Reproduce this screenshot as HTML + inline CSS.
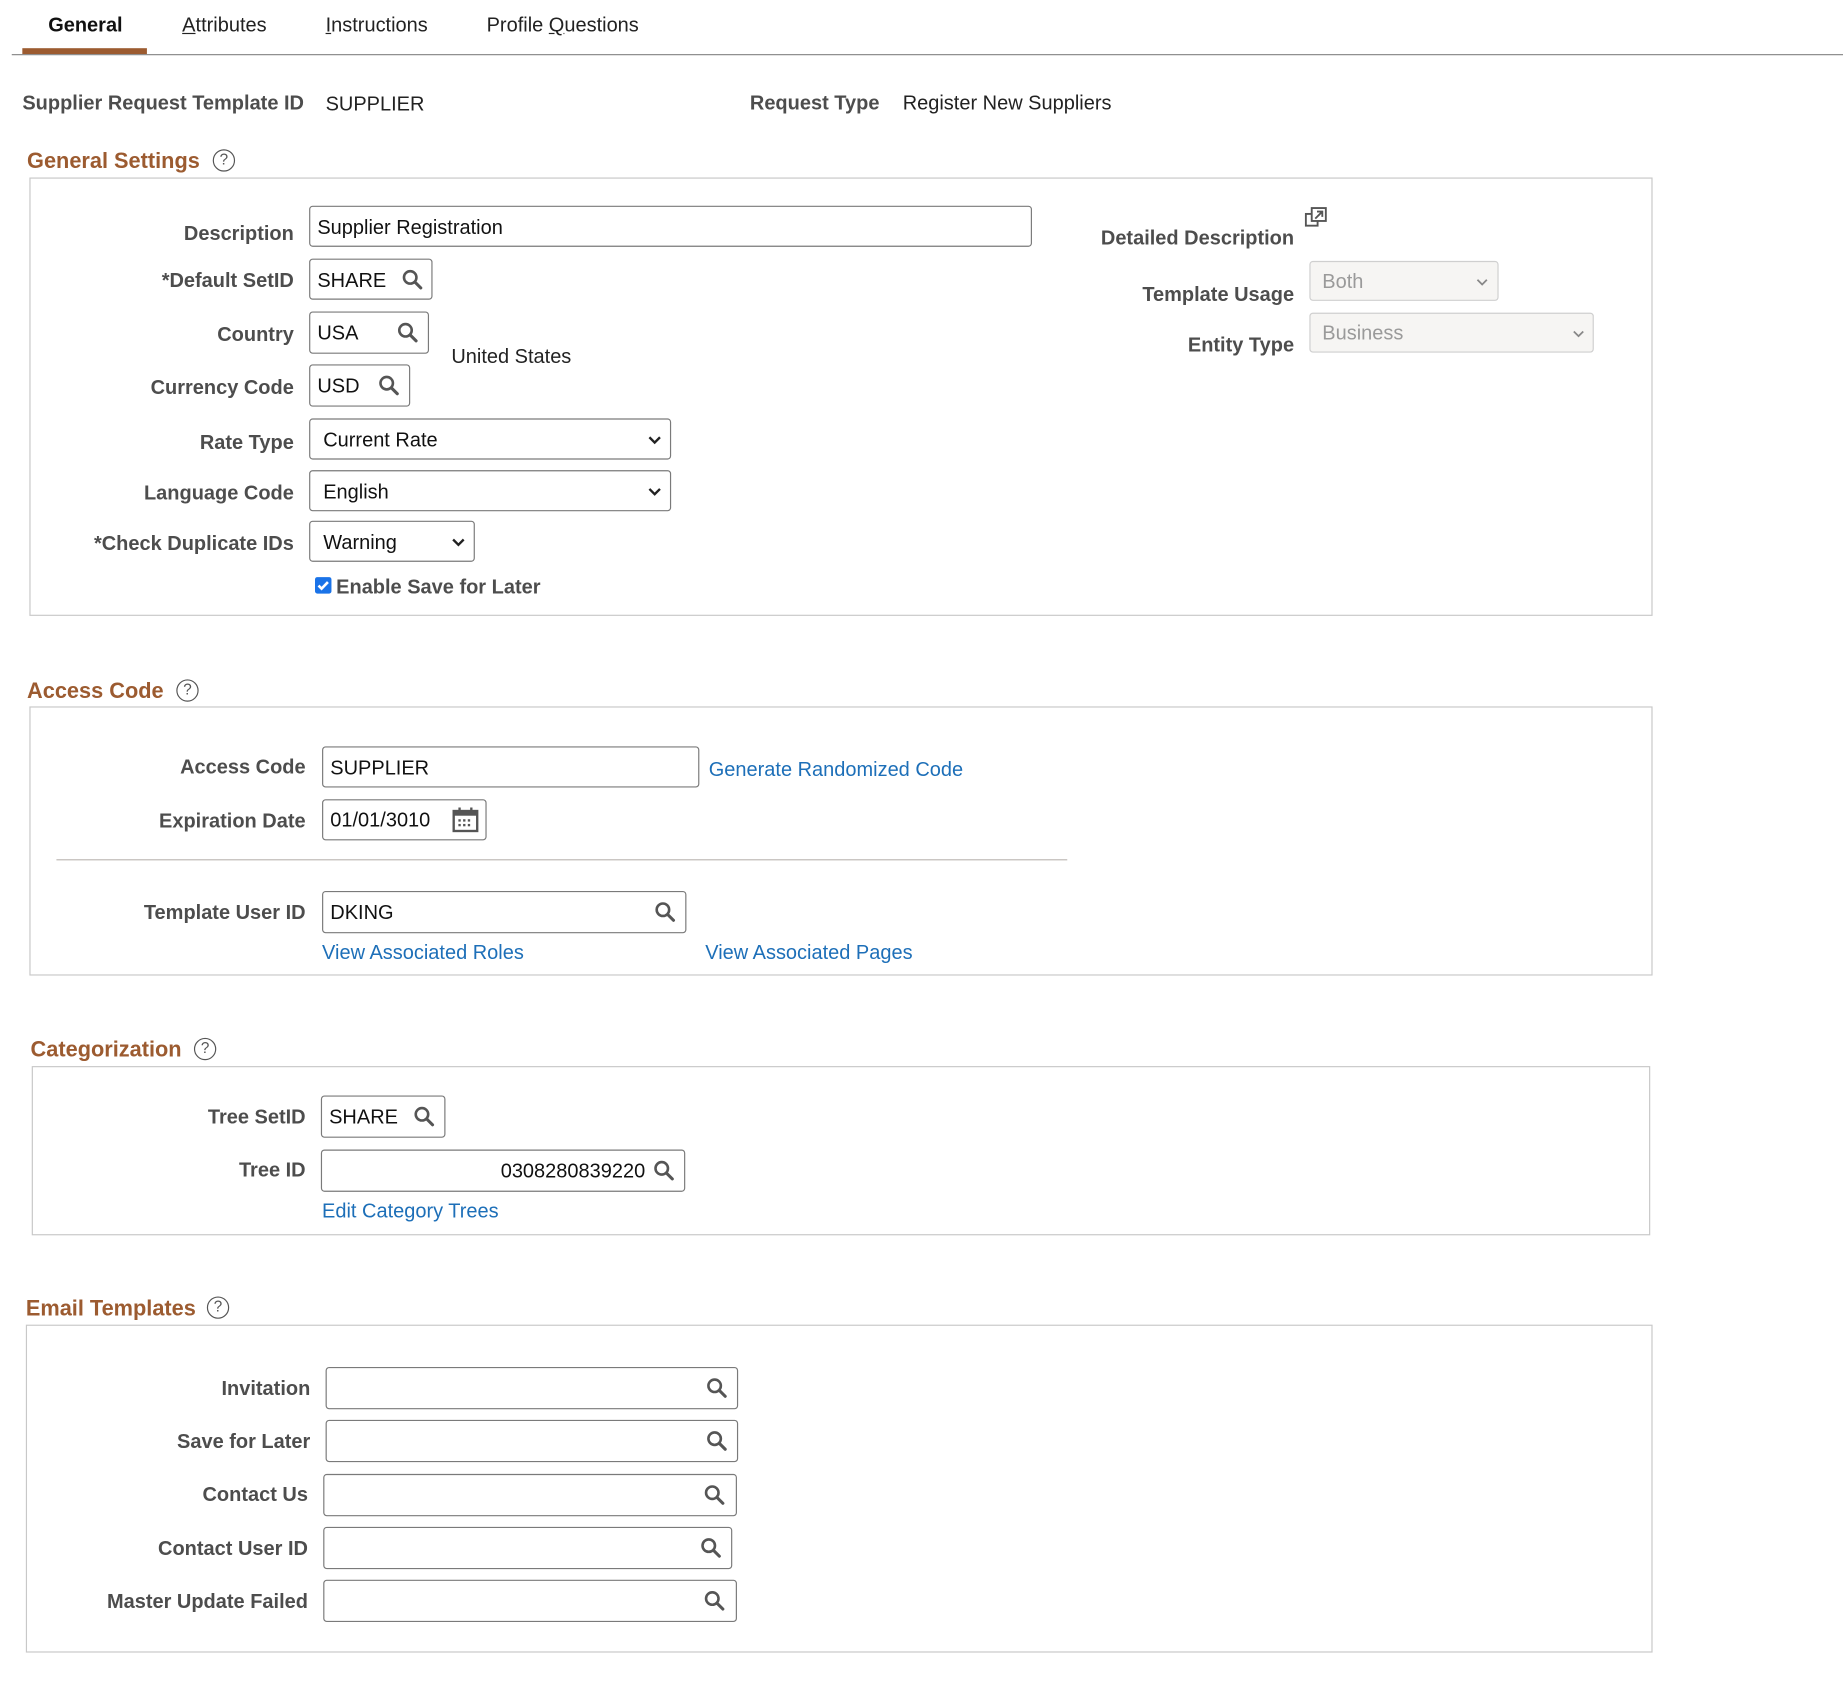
<!DOCTYPE html>
<html><head><meta charset="utf-8">
<style>
html,body{margin:0;padding:0;background:#fff;}
body{width:1843px;height:1680px;overflow:hidden;}
#c{position:relative;width:1568px;height:1430px;transform:scale(1.17538);transform-origin:0 0;font-family:"Liberation Sans",Arial,sans-serif;font-size:17px;color:#222;}
#c div,#c span{position:absolute;}
.t{white-space:nowrap;line-height:22px;}
.lb{font-weight:bold;color:#4d4d4d;text-align:right;white-space:nowrap;line-height:22px;}
.h{font-weight:bold;color:#9c5b30;font-size:18.5px;line-height:24px;white-space:nowrap;}
.box{border:1px solid #c8c8c8;box-sizing:border-box;}
.in{border:1px solid #7a7a7a;border-radius:3px;box-sizing:border-box;background:#fff;}
.in .v{left:6px;top:7px;line-height:22px;white-space:nowrap;color:#111;}
.dis{border:1px solid #cfcfcf;background:#f6f5f3;border-radius:3px;box-sizing:border-box;}
.dis .v{left:10px;top:7px;color:#9a9a9a;line-height:22px;}
.lk{color:#1d6fb8;white-space:nowrap;line-height:22px;}
.help{width:19px;height:19px;border:1.5px solid #555;border-radius:50%;box-sizing:border-box;font-size:13px;line-height:16px;text-align:center;color:#555;}
</style></head><body><div id="c">
<div class="t" style="left:41px;top:11px;font-weight:bold;color:#111">General</div>
<div class="t" style="left:155px;top:11px;color:#222"><u>A</u>ttributes</div>
<div class="t" style="left:277px;top:11px;color:#222"><u>I</u>nstructions</div>
<div class="t" style="left:414px;top:11px;color:#222">Profile <u>Q</u>uestions</div>
<div style="left:19px;top:41px;width:106px;height:5px;background:#9c5b30"></div>
<div style="left:10px;top:46px;width:1558px;height:1px;background:#888"></div>

<div class="lb" style="left:19px;top:77px">Supplier Request Template ID</div>
<div class="t" style="left:277px;top:78px">SUPPLIER</div>
<div class="lb" style="left:638px;top:77px">Request Type</div>
<div class="t" style="left:768px;top:77px">Register New Suppliers</div>

<div class="h" style="left:23px;top:125px">General Settings</div>
<div class="help" style="left:181px;top:127px">?</div>
<div class="box" style="left:25px;top:151px;width:1381px;height:373px"></div>

<div class="lb" style="left:0;width:250px;top:188px">Description</div>
<div class="in" style="left:263px;top:175px;width:615px;height:35px"><span class="v">Supplier Registration</span></div>

<div class="lb" style="left:0;width:250px;top:228px">*Default SetID</div>
<div class="in" style="left:263px;top:220px;width:105px;height:35px"><span class="v">SHARE</span>
<svg style="position:absolute;left:78px;top:8px" width="18" height="18" viewBox="0 0 18 18"><circle cx="7" cy="7" r="5.3" fill="none" stroke="#555" stroke-width="2.2"/><path d="M11 11l5 5" stroke="#555" stroke-width="2.6" stroke-linecap="round"/></svg></div>

<div class="lb" style="left:0;width:250px;top:274px">Country</div>
<div class="in" style="left:263px;top:265px;width:102px;height:36px"><span class="v">USA</span>
<svg style="position:absolute;left:74px;top:8px" width="18" height="18" viewBox="0 0 18 18"><circle cx="7" cy="7" r="5.3" fill="none" stroke="#555" stroke-width="2.2"/><path d="M11 11l5 5" stroke="#555" stroke-width="2.6" stroke-linecap="round"/></svg></div>
<div class="t" style="left:384px;top:293px">United States</div>

<div class="lb" style="left:0;width:250px;top:319px">Currency Code</div>
<div class="in" style="left:263px;top:310px;width:86px;height:36px"><span class="v">USD</span>
<svg style="position:absolute;left:58px;top:8px" width="18" height="18" viewBox="0 0 18 18"><circle cx="7" cy="7" r="5.3" fill="none" stroke="#555" stroke-width="2.2"/><path d="M11 11l5 5" stroke="#555" stroke-width="2.6" stroke-linecap="round"/></svg></div>

<div class="lb" style="left:0;width:250px;top:366px">Rate Type</div>
<div class="in" style="left:263px;top:356px;width:308px;height:35px"><span class="v" style="left:11px">Current Rate</span>
<svg style="position:absolute;left:287px;top:13px" width="12" height="9" viewBox="0 0 12 9"><path d="M1.5 2l4.5 4.5L10.5 2" fill="none" stroke="#222" stroke-width="2"/></svg></div>

<div class="lb" style="left:0;width:250px;top:409px">Language Code</div>
<div class="in" style="left:263px;top:400px;width:308px;height:35px"><span class="v" style="left:11px">English</span>
<svg style="position:absolute;left:287px;top:13px" width="12" height="9" viewBox="0 0 12 9"><path d="M1.5 2l4.5 4.5L10.5 2" fill="none" stroke="#222" stroke-width="2"/></svg></div>

<div class="lb" style="left:0;width:250px;top:452px">*Check Duplicate IDs</div>
<div class="in" style="left:263px;top:443px;width:141px;height:35px"><span class="v" style="left:11px">Warning</span>
<svg style="position:absolute;left:120px;top:13px" width="12" height="9" viewBox="0 0 12 9"><path d="M1.5 2l4.5 4.5L10.5 2" fill="none" stroke="#222" stroke-width="2"/></svg></div>

<div style="left:268px;top:491px;width:14px;height:14px;background:#1a73e8;border-radius:2px"><svg style="position:absolute;left:0;top:0" width="14" height="14" viewBox="0 0 14 14"><path d="M3 7.2l2.6 2.6L11 4.2" fill="none" stroke="#fff" stroke-width="2.2"/></svg></div>
<div class="lb" style="left:286px;top:489px;text-align:left">Enable Save for Later</div>

<div class="lb" style="left:800px;width:301px;top:192px">Detailed Description</div>
<svg style="position:absolute;left:1110px;top:176px" width="20" height="18" viewBox="0 0 20 18"><rect x="1" y="6" width="10" height="10" fill="none" stroke="#555" stroke-width="1.6"/><rect x="6" y="1" width="12" height="11" fill="#fff" stroke="#555" stroke-width="1.6"/><path d="M9 10l6-6M10.5 4h4.5v4.5" fill="none" stroke="#555" stroke-width="1.6"/></svg>

<div class="lb" style="left:800px;width:301px;top:240px">Template Usage</div>
<div class="dis" style="left:1114px;top:222px;width:161px;height:34px"><span class="v" style="top:6px">Both</span>
<svg style="position:absolute;left:140px;top:13px" width="12" height="8" viewBox="0 0 12 8"><path d="M2 2l4 4 4-4" fill="none" stroke="#888" stroke-width="1.5"/></svg></div>
<div class="lb" style="left:800px;width:301px;top:283px">Entity Type</div>
<div class="dis" style="left:1114px;top:266px;width:242px;height:34px"><span class="v" style="top:6px">Business</span>
<svg style="position:absolute;left:222px;top:13px" width="12" height="8" viewBox="0 0 12 8"><path d="M2 2l4 4 4-4" fill="none" stroke="#888" stroke-width="1.5"/></svg></div>

<div class="h" style="left:23px;top:576px">Access Code</div>
<div class="help" style="left:150px;top:578px">?</div>
<div class="box" style="left:25px;top:601px;width:1381px;height:229px"></div>

<div class="lb" style="left:0;width:260px;top:642px">Access Code</div>
<div class="in" style="left:274px;top:635px;width:321px;height:35px"><span class="v">SUPPLIER</span></div>
<div class="lk" style="left:603px;top:644px">Generate Randomized Code</div>

<div class="lb" style="left:0;width:260px;top:688px">Expiration Date</div>
<div class="in" style="left:274px;top:680px;width:140px;height:35px"><span class="v" style="top:6px">01/01/3010</span>
<svg style="position:absolute;left:109px;top:5px" width="24" height="23" viewBox="0 0 24 23"><rect x="2" y="4" width="20" height="17" fill="none" stroke="#555" stroke-width="2"/><rect x="2" y="4" width="20" height="4" fill="#555"/><path d="M7 1v5M17 1v5" stroke="#555" stroke-width="2"/><g fill="#555"><rect x="6" y="11" width="2" height="2"/><rect x="10" y="11" width="2" height="2"/><rect x="14" y="11" width="2" height="2"/><rect x="6" y="15" width="2" height="2"/><rect x="10" y="15" width="2" height="2"/><rect x="14" y="15" width="2" height="2"/></g></svg></div>

<div style="left:48px;top:731px;width:860px;height:1px;background:#bdb8b4"></div>

<div class="lb" style="left:0;width:260px;top:766px">Template User ID</div>
<div class="in" style="left:274px;top:758px;width:310px;height:36px"><span class="v">DKING</span>
<svg style="position:absolute;left:282px;top:8px" width="18" height="18" viewBox="0 0 18 18"><circle cx="7" cy="7" r="5.3" fill="none" stroke="#555" stroke-width="2.2"/><path d="M11 11l5 5" stroke="#555" stroke-width="2.6" stroke-linecap="round"/></svg></div>
<div class="lk" style="left:274px;top:800px">View Associated Roles</div>
<div class="lk" style="left:600px;top:800px">View Associated Pages</div>

<div class="h" style="left:26px;top:881px">Categorization</div>
<div class="help" style="left:165px;top:883px">?</div>
<div class="box" style="left:27px;top:907px;width:1377px;height:144px"></div>

<div class="lb" style="left:0;width:260px;top:940px">Tree SetID</div>
<div class="in" style="left:273px;top:932px;width:106px;height:36px"><span class="v">SHARE</span>
<svg style="position:absolute;left:78px;top:8px" width="18" height="18" viewBox="0 0 18 18"><circle cx="7" cy="7" r="5.3" fill="none" stroke="#555" stroke-width="2.2"/><path d="M11 11l5 5" stroke="#555" stroke-width="2.6" stroke-linecap="round"/></svg></div>
<div class="lb" style="left:0;width:260px;top:985px">Tree ID</div>
<div class="in" style="left:273px;top:978px;width:310px;height:36px"><span class="v" style="left:152px">0308280839220</span>
<svg style="position:absolute;left:282px;top:8px" width="18" height="18" viewBox="0 0 18 18"><circle cx="7" cy="7" r="5.3" fill="none" stroke="#555" stroke-width="2.2"/><path d="M11 11l5 5" stroke="#555" stroke-width="2.6" stroke-linecap="round"/></svg></div>
<div class="lk" style="left:274px;top:1020px">Edit Category Trees</div>

<div class="h" style="left:22px;top:1101px">Email Templates</div>
<div class="help" style="left:176px;top:1103px">?</div>
<div class="box" style="left:22px;top:1127px;width:1384px;height:279px"></div>

<div class="lb" style="left:0;width:264px;top:1171px">Invitation</div>
<div class="in" style="left:277px;top:1163px;width:351px;height:36px"><svg style="position:absolute;left:323px;top:8px" width="18" height="18" viewBox="0 0 18 18"><circle cx="7" cy="7" r="5.3" fill="none" stroke="#555" stroke-width="2.2"/><path d="M11 11l5 5" stroke="#555" stroke-width="2.6" stroke-linecap="round"/></svg></div>
<div class="lb" style="left:0;width:264px;top:1216px">Save for Later</div>
<div class="in" style="left:277px;top:1208px;width:351px;height:36px"><svg style="position:absolute;left:323px;top:8px" width="18" height="18" viewBox="0 0 18 18"><circle cx="7" cy="7" r="5.3" fill="none" stroke="#555" stroke-width="2.2"/><path d="M11 11l5 5" stroke="#555" stroke-width="2.6" stroke-linecap="round"/></svg></div>
<div class="lb" style="left:0;width:262px;top:1261px">Contact Us</div>
<div class="in" style="left:275px;top:1254px;width:352px;height:36px"><svg style="position:absolute;left:323px;top:8px" width="18" height="18" viewBox="0 0 18 18"><circle cx="7" cy="7" r="5.3" fill="none" stroke="#555" stroke-width="2.2"/><path d="M11 11l5 5" stroke="#555" stroke-width="2.6" stroke-linecap="round"/></svg></div>
<div class="lb" style="left:0;width:262px;top:1307px">Contact User ID</div>
<div class="in" style="left:275px;top:1299px;width:348px;height:36px"><svg style="position:absolute;left:320px;top:8px" width="18" height="18" viewBox="0 0 18 18"><circle cx="7" cy="7" r="5.3" fill="none" stroke="#555" stroke-width="2.2"/><path d="M11 11l5 5" stroke="#555" stroke-width="2.6" stroke-linecap="round"/></svg></div>
<div class="lb" style="left:0;width:262px;top:1352px">Master Update Failed</div>
<div class="in" style="left:275px;top:1344px;width:352px;height:36px"><svg style="position:absolute;left:323px;top:8px" width="18" height="18" viewBox="0 0 18 18"><circle cx="7" cy="7" r="5.3" fill="none" stroke="#555" stroke-width="2.2"/><path d="M11 11l5 5" stroke="#555" stroke-width="2.6" stroke-linecap="round"/></svg></div>
</div></body></html>
